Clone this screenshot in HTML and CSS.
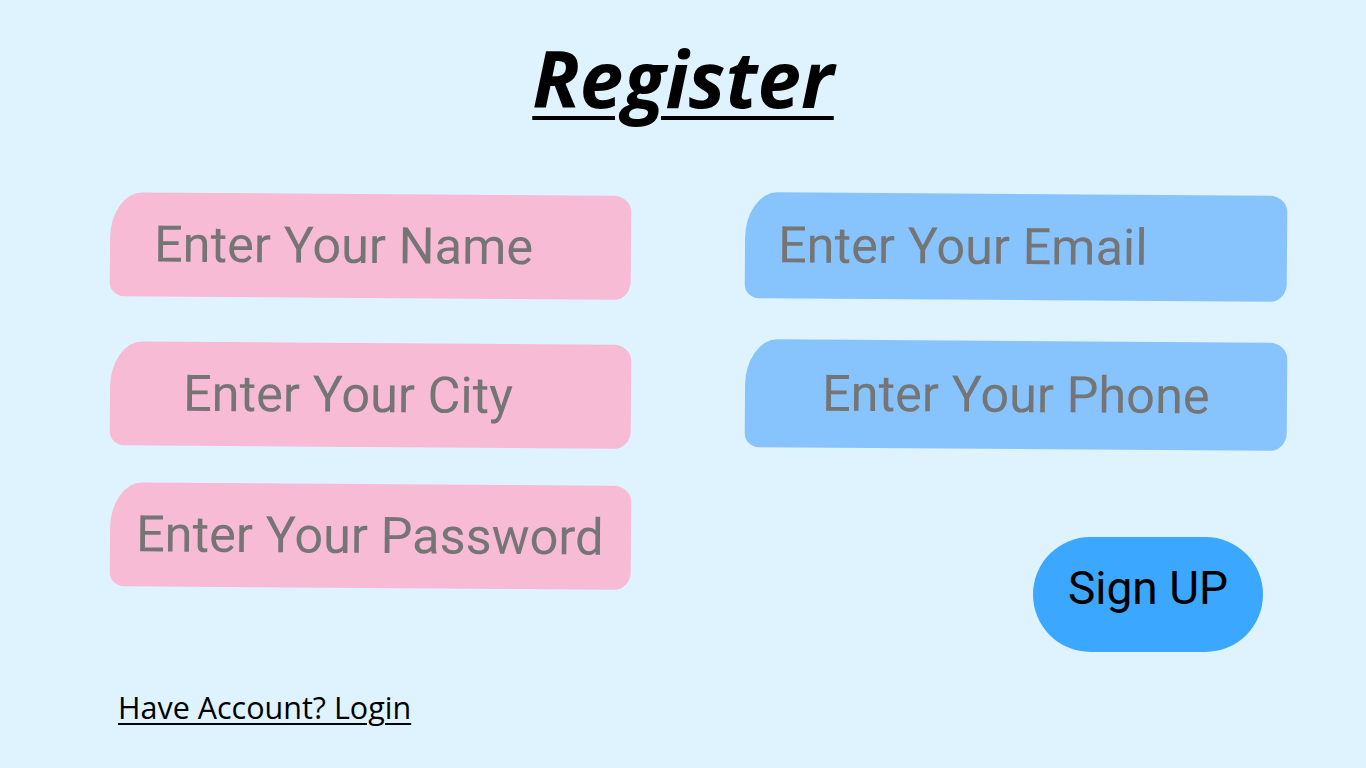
FILE: index.html
```html
<!DOCTYPE html>
<html lang="en">
<head>
<meta charset="utf-8">
<title>Register</title>
<link rel="stylesheet" href="styles.css">
</head>
<body>
<main class="page">
  <h1 class="title">Register</h1>
  <form class="form">
    <div class="fields">
      <input class="field field-pink pad-name" type="text" placeholder="Enter Your Name">
      <input class="field field-blue pad-email" type="email" placeholder="Enter Your Email">
      <input class="field field-pink pad-city" type="text" placeholder="Enter Your City">
      <input class="field field-blue pad-phone" type="tel" placeholder="Enter Your Phone">
      <input class="field field-pink pad-pass" type="password" placeholder="Enter Your Password">
      <button class="signup" type="button">Sign UP</button>
    </div>
    <a class="login" href="#">Have Account? Login</a>
  </form>
</main>
</body>
</html>
```
FILE: styles.css
```css
html, body {
  margin: 0;
  padding: 0;
}
body {
  background: #dff3fe;
  width: 1366px;
  height: 768px;
  overflow: hidden;
}
.page {
  display: flex;
  flex-direction: column;
}
.title {
  margin: 0;
  padding-top: 30px;
  text-align: center;
  font-family: "Open Sans", "Liberation Sans", sans-serif;
  font-weight: 700;
  font-style: italic;
  font-size: 78px;
  line-height: 96px;
  color: #000;
  text-decoration: underline;
  text-decoration-thickness: 4px;
  text-underline-offset: 8px;
}
.form {
  display: flex;
  flex-direction: column;
  padding-left: 110px;
  padding-top: 68px;
}
.fields {
  display: grid;
  grid-template-columns: 521px 542px;
  grid-template-rows: 104px 104px 104px;
  column-gap: 114px;
  row-gap: 45px;
}
.field {
  box-sizing: border-box;
  width: 100%;
  height: 104px;
  border: none;
  outline: none;
  margin: 0;
  padding-bottom: 3px;
  font-family: "Roboto", "Liberation Sans", sans-serif;
  font-size: 50.5px;
  color: #757575;
  border-radius: 32px 18px 16px 14px / 46px 16px 18px 14px;
  transform: rotate(0.4deg);
}
.field::placeholder {
  color: #757575;
  opacity: 1;
}
.field-pink { background: #f7bbd6; }
.field-blue { background: #87c3fd; }
.pad-name { padding-left: 44px; }
.pad-city { padding-left: 73px; }
.pad-pass { padding-left: 26px; margin-top: -8px; }
.pad-email { padding-left: 33px; height: 106px; }
.pad-phone { padding-left: 77px; height: 108px; margin-top: -2px; }
.signup {
  justify-self: end;
  align-self: start;
  margin-right: 24px;
  margin-top: 45px;
  width: 230px;
  height: 115px;
  border: none;
  border-radius: 58px;
  background: #3ba7ff;
  color: #000;
  font-family: "Roboto", "Liberation Sans", sans-serif;
  font-size: 46px;
  padding: 0 0 14px 0;
  cursor: pointer;
}
.login {
  align-self: flex-start;
  margin-left: 8px;
  margin-top: 90px;
  font-family: "Open Sans", "Liberation Sans", sans-serif;
  font-size: 30.5px;
  color: #000;
  text-decoration: underline;
  text-decoration-thickness: 2px;
  text-underline-offset: 4px;
}
```
